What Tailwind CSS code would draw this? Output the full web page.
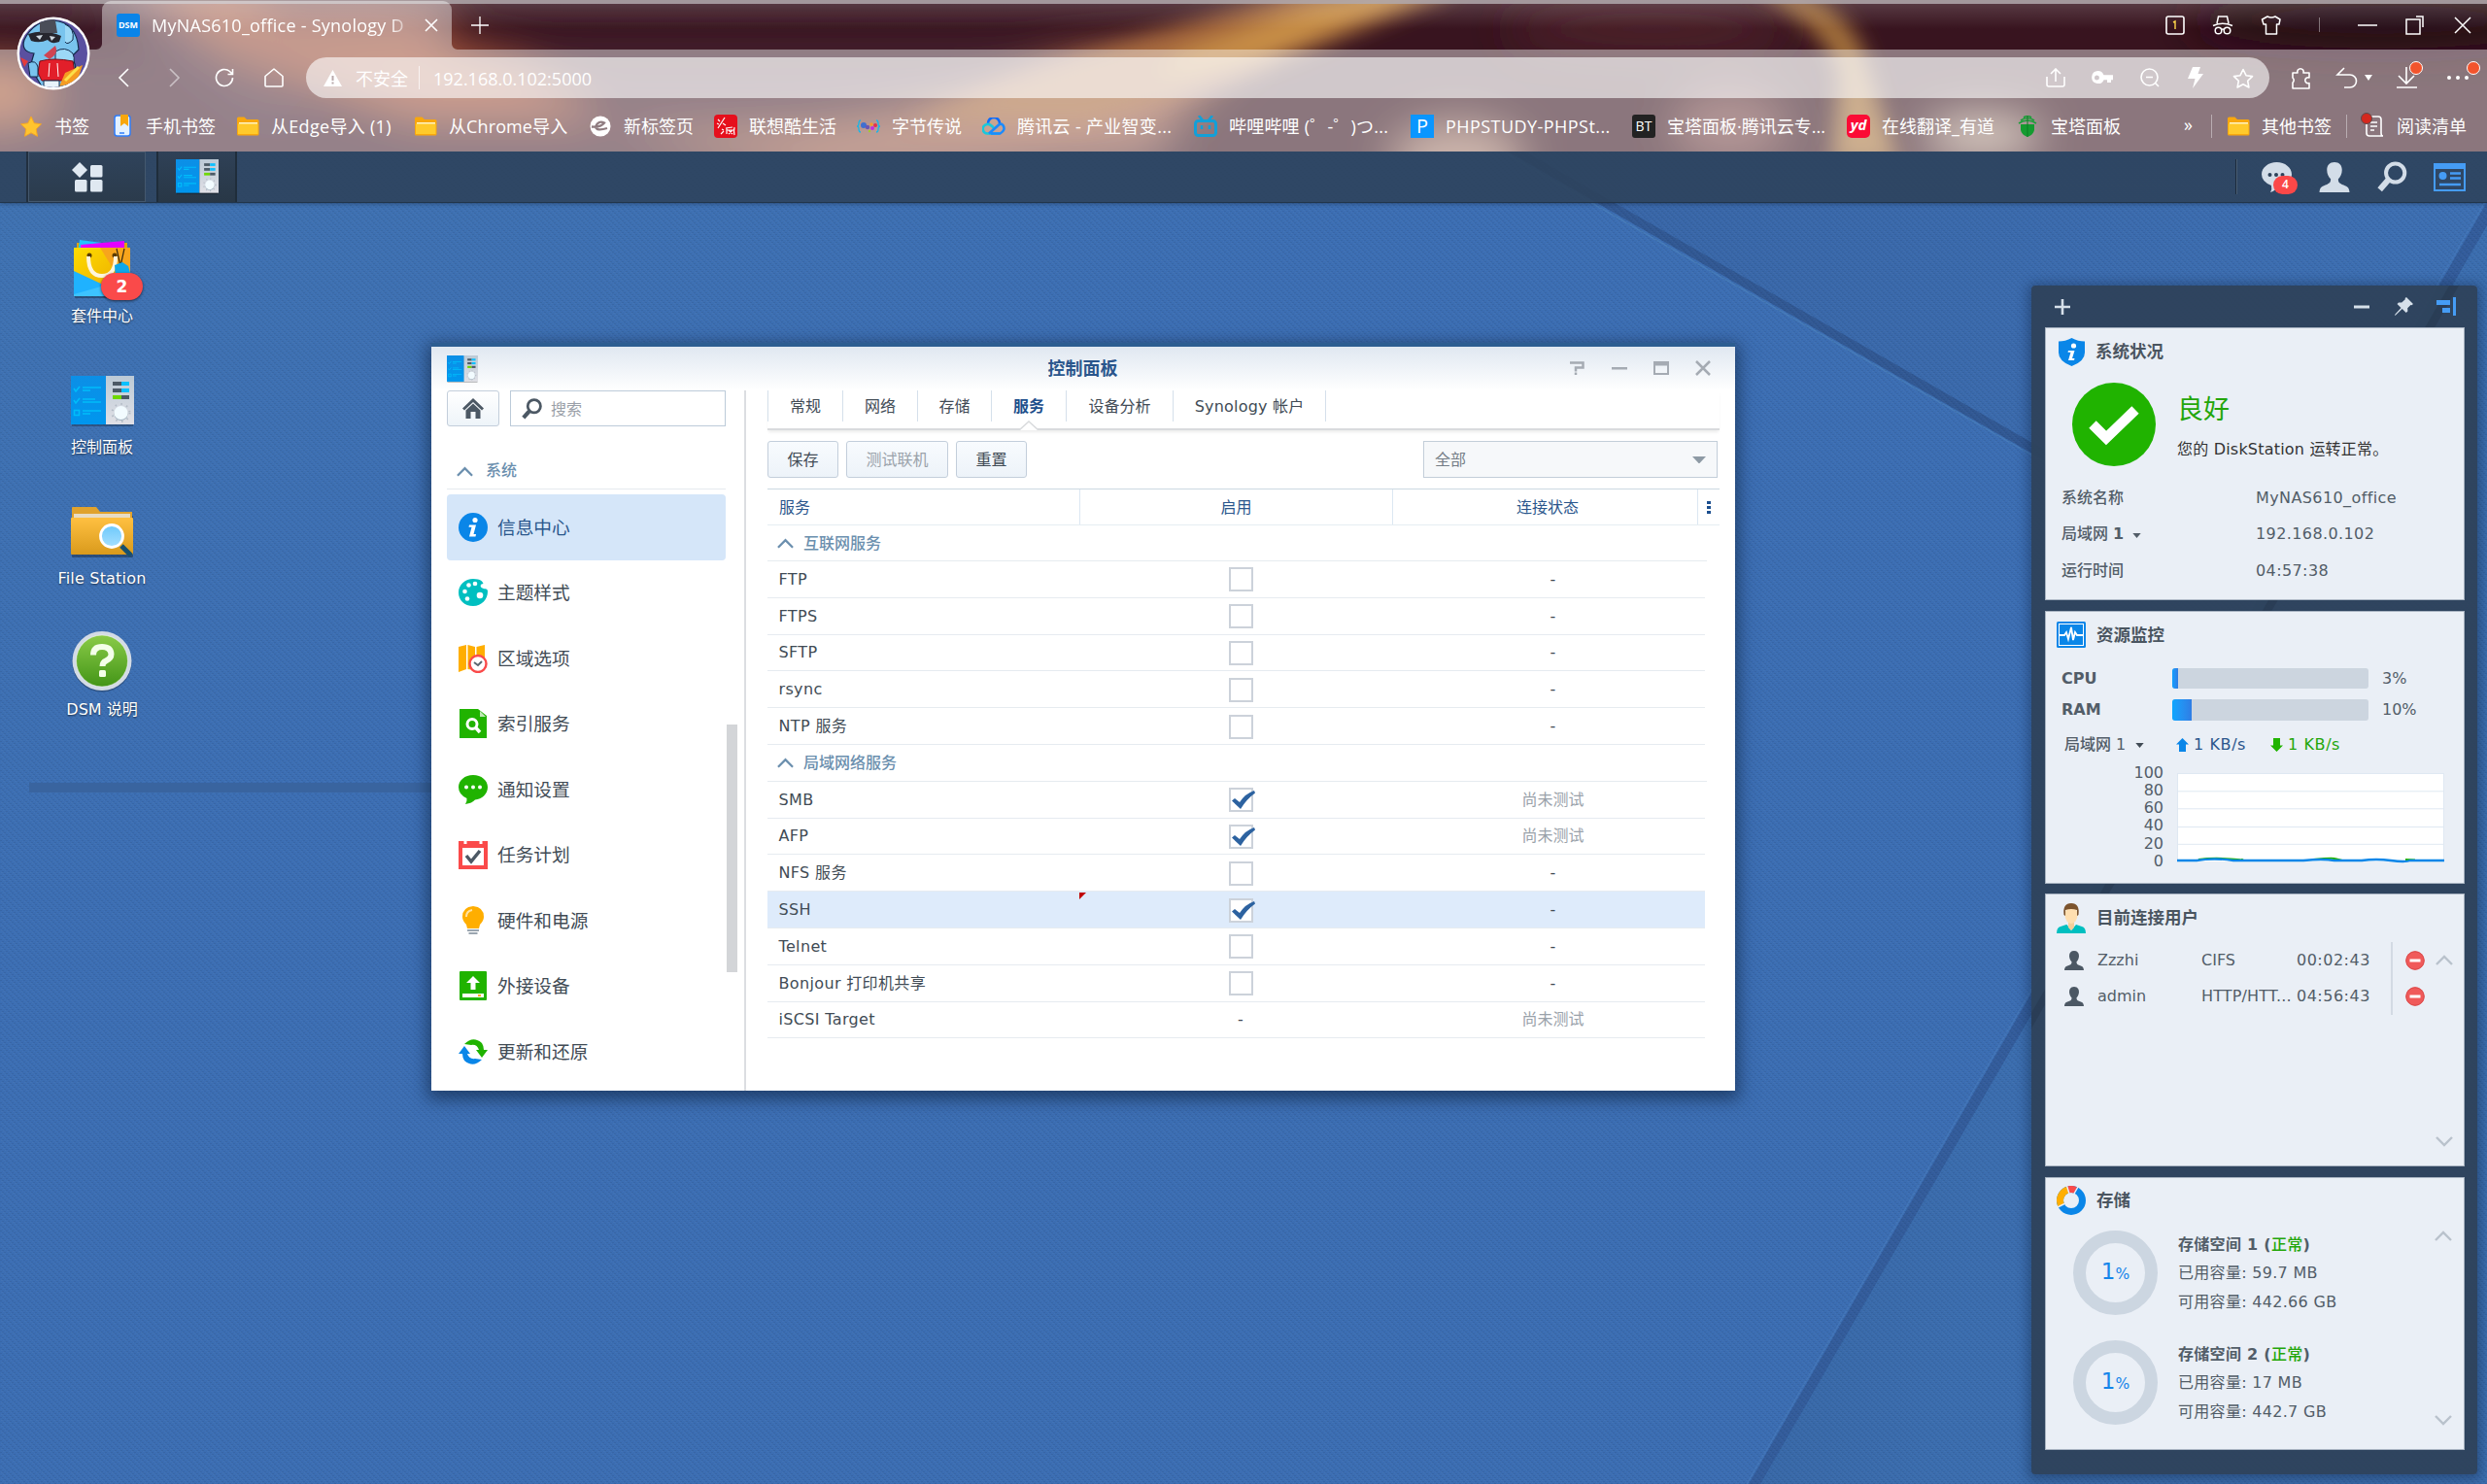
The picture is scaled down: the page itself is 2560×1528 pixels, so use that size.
<!DOCTYPE html>
<html lang="zh-CN">
<head>
<meta charset="utf-8">
<title>MyNAS610_office - Synology DiskStation</title>
<script src="https://cdn.jsdelivr.net/npm/@tailwindcss/browser@4"></script>
</head>
<body class="w-[2560px] h-[1528px] overflow-hidden flex flex-col font-['DejaVu_Sans','Noto_Sans_CJK_SC',sans-serif] text-[16px] leading-6 text-[#414b55]">

<!-- Shared symbols -->
<svg width="0" height="0" class="absolute">
  <defs>
    <linearGradient id="gBlue" x1="0" y1="0" x2="0" y2="1"><stop offset="0" stop-color="#0c8fe6"/><stop offset="1" stop-color="#0096ee"/></linearGradient>
    <linearGradient id="gGrey" x1="0" y1="0" x2="0" y2="1"><stop offset="0" stop-color="#bccad6"/><stop offset="1" stop-color="#e0e0e6"/></linearGradient>
    <linearGradient id="gFolder" x1="0" y1="0" x2="0" y2="1"><stop offset="0" stop-color="#ffc041"/><stop offset="1" stop-color="#d99a1c"/></linearGradient>
    <linearGradient id="gLens" x1="0" y1="0" x2="0" y2="1"><stop offset="0" stop-color="#6cc8fb"/><stop offset="1" stop-color="#a6e0ff"/></linearGradient>
    <linearGradient id="gGreen" x1="0" y1="0" x2="0" y2="1"><stop offset="0" stop-color="#8acb48"/><stop offset="1" stop-color="#439517"/></linearGradient>
    <linearGradient id="gBag" x1="0" y1="0" x2="1" y2="1"><stop offset="0" stop-color="#ffdc00"/><stop offset="1" stop-color="#e8a400"/></linearGradient>
    <symbol id="cpanel" viewBox="0 0 65 52" preserveAspectRatio="none">
      <rect x="1" y="3" width="63" height="49" fill="#000" opacity=".25"/>
      <rect width="36" height="50" fill="url(#gBlue)"/><rect x="36" width="29" height="50" fill="url(#gGrey)"/>
      <g fill="none" stroke="#00bdfa" stroke-width="1.6"><path d="M3 13l2 3 4-5M3 25l2 3 4-5M12 12h19M12 15h8M12 24h13M12 27h19M12 36h19M12 39h8"/><rect x="3.5" y="35.500" width="5" height="5"/></g>
      <rect x="43" y="6" width="9" height="4" fill="#4c5a66"/><rect x="52" y="6" width="8" height="4" fill="#0cc0ff"/>
      <rect x="43" y="13" width="9" height="4" fill="#4c5a66"/><rect x="52" y="13" width="8" height="4" fill="#0cc0ff"/>
      <rect x="43" y="20" width="9" height="4" fill="#6fd800"/><rect x="52" y="20" width="8" height="4" fill="#4c5a66"/>
      <circle cx="51.500" cy="38" r="9" fill="none" stroke="#b3bcc6" stroke-dasharray="1.500 4.500" stroke-width="2"/>
      <circle cx="51.500" cy="39" r="7" fill="#9fb0bd"/><circle cx="51.500" cy="38" r="7" fill="#f2fbff"/>
    </symbol>
    <symbol id="bmfolder" viewBox="0 0 24 20"><path d="M1 2a1.500 1.500 0 0 1 1.500-1.500h6L11 3h11a1.500 1.500 0 0 1 1.500 1.500V18A1.500 1.500 0 0 1 22 19.500H2.500A1.500 1.500 0 0 1 1 18z" fill="#f8a70d"/><path d="M3 6h19v2.500H3z" fill="#fff3c4"/><path d="M2 7.500h20.500V18H2z" fill="#ffca2b"/></symbol>
    <symbol id="user" viewBox="0 0 20 20"><path d="M10 0c3.200 0 5 2 5 5.200 0 2.600-1.200 4.800-2.500 6 0 2 .5 2.800 2.500 3.600 3 1.100 4.700 1.400 5 5.200H0c.3-3.800 2-4.100 5-5.200 2-.8 2.500-1.600 2.500-3.600C6.200 10 5 7.800 5 5.200 5 2 6.800 0 10 0z" fill="currentColor"/></symbol>
    <symbol id="mag" viewBox="0 0 24 24"><circle cx="14" cy="9" r="7.200" fill="none" stroke="currentColor" stroke-width="3"/><path d="M8.500 14.500L2 22" stroke="currentColor" stroke-width="4.500"/></symbol>
    <symbol id="stop" viewBox="0 0 20 20"><circle cx="10" cy="10" r="9.700" fill="#f05a5a"/><circle cx="10" cy="10" r="9.200" fill="none" stroke="#d94b4b"/><rect x="4.500" y="8.500" width="11" height="3" fill="#fff"/></symbol>
    <symbol id="up" viewBox="0 0 18 11"><path d="M1 10l8-8 8 8" fill="none" stroke="currentColor" stroke-width="2.400"/></symbol>
    <symbol id="caret" viewBox="0 0 10 6"><path d="M0 0h10L5 6z" fill="currentColor"/></symbol>
  </defs>
</svg>

<!-- ================= Browser chrome ================= -->
<header class="relative h-[156px] shrink-0 overflow-hidden bg-[#35131f] text-white text-[18px] font-['Open_Sans','Noto_Sans_CJK_SC',sans-serif]">
  <svg class="absolute inset-0" width="2560" height="156">
    <defs><filter id="b1" x="-30%" y="-60%" width="160%" height="220%"><feGaussianBlur stdDeviation="22"/></filter><filter id="b2" x="-30%" y="-30%" width="160%" height="160%"><feGaussianBlur stdDeviation="11"/></filter>
    <linearGradient id="topl" x1="0" y1="0" x2="0" y2="1"><stop offset="0" stop-color="#fff" stop-opacity=".18"/><stop offset="1" stop-color="#fff" stop-opacity="0"/></linearGradient></defs>
    <rect width="2560" height="156" fill="#38141f"/>
    <g filter="url(#b1)">
      <rect x="-40" y="50" width="1250" height="150" fill="#4a2636"/>
      <path d="M110-20H240L520 60 620 120H430L250 60z" fill="#a8593c"/>
      <ellipse cx="-10" cy="95" rx="60" ry="30" fill="#b0603c"/>
      <ellipse cx="360" cy="20" rx="110" ry="25" fill="#8f4c40"/>
      <path d="M620 130Q900 160 1100 60L1300 40 1180 150 850 180z" fill="#a0604c"/>
      <path d="M80 -20H135L330 120H260z" fill="#533040"/>
      <ellipse cx="1500" cy="165" rx="70" ry="40" fill="#a88070"/>
      <ellipse cx="1780" cy="130" rx="60" ry="40" fill="#7a4a4a"/>
      <ellipse cx="2040" cy="140" rx="60" ry="22" fill="#c8b09c"/>
      <ellipse cx="1700" cy="30" rx="150" ry="25" fill="#4e212b"/>
      <ellipse cx="2450" cy="20" rx="200" ry="30" fill="#260a12"/>
    </g>
    <g filter="url(#b2)">
      <path d="M1340-10H1500L1290 75 1120 125H930L1120 55z" fill="#a86a3c"/>
      <path d="M1410-15H1500L1300 58 1190 78 1220 55z" fill="#c99046"/>
      <path d="M1805-10H1845Q1905 10 1920 60L1955 170H1885L1893 80Q1885 30 1805-10z" fill="#a8743c"/>
    </g>
    <rect width="2560" height="30" fill="url(#topl)"/>
    <rect width="2560" height="4" fill="#b0a8ac" opacity=".85"/>
    <path d="M0 51H99a6 6 0 0 0 6-6V10a9 9 0 0 1 9-9H456a9 9 0 0 1 9 9V45a6 6 0 0 0 6 6H2560V156H0z" fill="#fff" opacity=".42"/>
  </svg>

  <!-- Tab strip -->
  <div class="relative h-[51px] flex items-center pl-[120px]">
    <span class="w-6 h-6 rounded-[3px] bg-[#0a84e8] text-[9px] font-bold flex items-center justify-center leading-none">DSM</span>
    <span class="ml-3 w-[271px] whitespace-nowrap tracking-[0.250px] [mask-image:linear-gradient(90deg,#000_245px,transparent_272px)]">MyNAS610_office - Synology D</span>
    <svg class="ml-[10px]" width="14" height="14" viewBox="0 0 14 14" stroke="#fff" stroke-width="1.600"><path d="M1 1l12 12M13 1L1 13"/></svg>
    <svg class="ml-[34px]" width="18" height="18" viewBox="0 0 18 18" stroke="#fff" stroke-width="1.300"><path d="M9 0v18M0 9h18"/></svg>
    <div class="ml-auto pr-[16px] flex items-center">
      <svg width="20" height="20" viewBox="0 0 20 20" fill="none" stroke="#fff" stroke-width="1.600"><rect x="1" y="1" width="18" height="18" rx="2"/><path d="M8 7l2-1v8" stroke="#ffd84a" stroke-width="1.400"/></svg>
      <svg class="ml-[28px]" width="22" height="20" viewBox="0 0 22 20" fill="none" stroke="#fff" stroke-width="1.500"><path d="M5 8L6.500 1h9L17 8M1 10.500Q11 6 21 10.500"/><circle cx="6.500" cy="15.500" r="3.300"/><circle cx="15.500" cy="15.500" r="3.300"/><path d="M9.500 14.500q1.500-1 3 0"/></svg>
      <svg class="ml-[28px]" width="22" height="20" viewBox="0 0 22 20" fill="none" stroke="#fff" stroke-width="1.500"><path d="M7 1q4 2 8 0l5 3-1 5h-2.500v10h-11V9H3L1.500 4z" stroke-linejoin="round"/></svg>
      <span class="ml-[38px] w-px h-[15px] bg-white/40"></span>
      <svg class="ml-[39px]" width="20" height="20" viewBox="0 0 20 20" stroke="#fff" stroke-width="1.500"><path d="M0 10h20"/></svg>
      <svg class="ml-[29px]" width="19" height="20" viewBox="0 0 19 20" fill="none" stroke="#fff" stroke-width="1.500"><rect x="1" y="4" width="14" height="15"/><path d="M11 1h7v11"/></svg>
      <svg class="ml-[31px]" width="18" height="18" viewBox="0 0 18 18" stroke="#fff" stroke-width="1.500"><path d="M1 1l16 16M17 1L1 17"/></svg>
    </div>
  </div>

  <!-- Toolbar -->
  <div class="relative h-[58px] flex items-center pl-[121px]">
    <svg width="12" height="20" viewBox="0 0 12 20" fill="none" stroke="#fff" stroke-width="1.600"><path d="M11 1L2 10l9 9"/></svg>
    <svg class="ml-[41px] opacity-50" width="12" height="20" viewBox="0 0 12 20" fill="none" stroke="#fff" stroke-width="1.600"><path d="M1 1l9 9-9 9"/></svg>
    <svg class="ml-[35px]" width="20" height="20" viewBox="0 0 20 20" fill="none" stroke="#fff" stroke-width="1.600"><path d="M18.500 10a8.500 8.500 0 1 1-3-6.500L18 6M18.500 1v5.500h-5"/></svg>
    <svg class="ml-[31px]" width="20" height="20" viewBox="0 0 20 20" fill="none" stroke="#fff" stroke-width="1.600"><path d="M1 8.500L10 1l9 7.500V18a1 1 0 0 1-1 1H2a1 1 0 0 1-1-1z" stroke-linejoin="round"/></svg>
    <div class="ml-[23px] w-[2021px] h-[42px] rounded-full bg-white/60 flex items-center pl-[18px] pr-[16px]">
      <svg width="19" height="17" viewBox="0 0 19 17"><path d="M9.500 0L19 17H0z" fill="#fff"/><path d="M9.500 6v5M9.500 12.500v2" stroke="#b9a9ab" stroke-width="2"/></svg>
      <span class="ml-[14px] w-[54px] pt-px">不安全</span>
      <span class="ml-[11px] w-px h-6 bg-white/70"></span>
      <span class="ml-[14px] pt-px">192.168.0.102:5000</span>
      <span class="ml-auto"></span>
      <svg width="20" height="20" viewBox="0 0 20 20" fill="none" stroke="#fff" stroke-width="1.600"><path d="M10 14V1M5 6l5-5 5 5M1 9v8a2 2 0 0 0 2 2h14a2 2 0 0 0 2-2V9"/></svg>
      <svg class="ml-[27px]" width="22" height="14" viewBox="0 0 22 14"><path d="M6.500 0a6.500 6.500 0 0 1 6 4.200H22v5h-2V12h-4V9.200h-3.400A6.500 6.500 0 1 1 6.500 0zm-1 4.500a2.500 2.500 0 1 0 0 5 2.500 2.500 0 0 0 0-5z" fill="#fff" fill-rule="evenodd"/></svg>
      <svg class="ml-[28px]" width="20" height="20" viewBox="0 0 20 20" fill="none" stroke="#fff" stroke-width="1.600"><circle cx="9.500" cy="9.500" r="8.500"/><path d="M6 9.500h7M15.500 15.500L19 19"/></svg>
      <svg class="ml-[29px]" width="16" height="22" viewBox="0 0 16 22"><path d="M5 0h8l-2.500 7H16L5 22l2.500-10H0z" fill="#fff"/></svg>
      <svg class="ml-[30px]" width="22" height="21" viewBox="0 0 22 21" fill="none" stroke="#fff" stroke-width="1.600"><path d="M11 1.500l3 6.200 6.500.9-4.800 4.700 1.200 6.700L11 16.800 5.100 20l1.200-6.700L1.500 8.600 8 7.700z" stroke-linejoin="round"/></svg>
    </div>
    <svg class="ml-[21px]" width="23" height="23" viewBox="0 0 23 23" fill="none" stroke="#fff" stroke-width="1.600"><path d="M3 6h5a3.200 3.200 0 1 1 6 0h6v5a3 3 0 1 0 0 5.500V22H3v-6a3.200 3.200 0 0 0 0-5z" stroke-linejoin="round"/></svg>
    <svg class="ml-[24px]" width="38" height="22" viewBox="0 0 38 22" fill="none" stroke="#fff" stroke-width="1.600"><path d="M9 1L2 8h13a6.500 6.500 0 0 1 0 13H9"/><path d="M30 8h8l-4 6z" fill="#fff" stroke="none"/></svg>
    <div class="ml-[25px] relative w-[22px] h-[22px]">
      <svg width="22" height="22" viewBox="0 0 22 22" fill="none" stroke="#fff" stroke-width="1.600"><path d="M10 0v17M2 9l8 8 8-8M0 21h21"/></svg>
      <span class="absolute -top-[6px] left-[13px] w-[14px] h-[14px] rounded-full bg-[#f2542d] border border-white"></span>
    </div>
    <div class="ml-[30px] relative w-[24px] h-[22px] flex items-center gap-[5px]">
      <i class="w-[4px] h-[4px] rounded-full bg-white"></i><i class="w-[4px] h-[4px] rounded-full bg-white"></i><i class="w-[4px] h-[4px] rounded-full bg-white"></i>
      <span class="absolute -top-[6px] left-[20px] w-[14px] h-[14px] rounded-full bg-[#f2542d] border border-white"></span>
    </div>
  </div>

  <!-- Bookmarks bar -->
  <nav class="relative h-[41px] flex items-center pl-[20px] whitespace-nowrap [&>a]:flex [&>a]:items-center [&>a]:gap-3 [&>a]:shrink-0">
    <a class="w-[94px]"><svg width="24" height="22" viewBox="0 0 24 22"><path d="M12 1l3.200 6.800 7.300 1-5.300 5.200 1.300 7.300L12 17.800 5.500 21.300 6.800 14 1.500 8.800l7.300-1z" fill="#ffc42e" stroke="#f6a623"/></svg><span>书签</span></a>
    <a class="w-[129px]"><svg width="24" height="24" viewBox="0 0 24 24"><rect x="4" y="1" width="16" height="21" rx="2.500" fill="#e4f1ff" stroke="#2e7dfa" stroke-width="1.500"/><path d="M10 0h8v12l-4-3-4 3z" fill="#f8a70d"/><path d="M9 19h5" stroke="#2e7dfa" stroke-width="1.500"/></svg><span>手机书签</span></a>
    <a class="w-[183px]"><svg width="24" height="20"><use href="#bmfolder"/></svg><span class="tracking-[0.300px]">从Edge导入 (1)</span></a>
    <a class="w-[180px]"><svg width="24" height="20"><use href="#bmfolder"/></svg><span class="tracking-[0.100px]">从Chrome导入</span></a>
    <a class="w-[129px]"><svg width="24" height="22" viewBox="0 0 24 22"><circle cx="12" cy="11" r="10.500" fill="#fff"/><path d="M3 11.500q9 1 13-4-6-3-9 4 1 5 12 1.500" fill="none" stroke="#8f7c80" stroke-width="2.300"/></svg><span>新标签页</span></a>
    <a class="w-[147px]"><svg width="24" height="24" viewBox="0 0 24 24"><rect width="24" height="24" rx="4" fill="#e60f1c"/><path d="M4 5l2 2M3 9l2 1M11 3L4 14M9 9l3 2M8 15l2 1M7 20l3-3M12 14l7-1M13 14v6M13 16h6l-4 4M15 16l4 4M21 13q-1 4 0 8" stroke="#fff" stroke-width="1.200" fill="none"/></svg><span>联想酷生活</span></a>
    <a class="w-[129px]"><svg width="24" height="14" viewBox="0 0 24 14"><path d="M4 1Q2 1 2 4T0 7q2 0 2 3t2 3M20 1q2 0 2 3t2 3q-2 0-2 3t-2 3" fill="none" stroke="#19b6e8" stroke-width="1.300"/><circle cx="7" cy="6" r="3" fill="#3f6fd0"/><circle cx="11" cy="8" r="2.200" fill="#6a56b5"/><circle cx="15" cy="5" r="1.800" fill="#f59b2d"/><circle cx="19" cy="6" r="2" fill="#e8304a"/><circle cx="16" cy="9" r="2" fill="#c22de0"/><circle cx="13" cy="12" r="1.200" fill="#a5c92a"/></svg><span>字节传说</span></a>
    <a class="w-[218px]"><svg width="24" height="18" viewBox="0 0 24 18" fill="none" stroke-width="2.600"><path d="M6 6a6 6 0 0 1 12 0" stroke="#0a6cff"/><path d="M12 11Q8 6 5 7a4.600 4.600 0 0 0 1 9.500h12" stroke="#18c8dc"/><path d="M7 16.500L16 8.500Q19 5 21.500 8q3 5-3 8.500H9" stroke="#1a8bff"/></svg><span class="tracking-[0.300px]">腾讯云 - 产业智变...</span></a>
    <a class="w-[223px]"><svg width="24" height="22" viewBox="0 0 24 22" fill="none" stroke="#12a0d8" stroke-width="3"><rect x="1.500" y="5.500" width="21" height="15" rx="3"/><path d="M5 0l4 5M19 0l-4 5M8 10v4M16 10v4" stroke-width="2.600"/></svg><span class="tracking-[0.200px]">哔哩哔哩 (゜-゜)つ...</span></a>
    <a class="w-[228px]"><span class="w-6 h-6 bg-[#0a96ff] flex items-center justify-center text-[20px] leading-none">P</span><span class="tracking-[0.450px]">PHPSTUDY-PHPSt...</span></a>
    <a class="w-[221px]"><span class="w-6 h-6 rounded-[3px] bg-[#222] flex items-center justify-center text-[14px] leading-none">BT</span><span>宝塔面板·腾讯云专...</span></a>
    <a class="w-[174px]"><span class="w-6 h-6 rounded-[5px] bg-[#fb0b35] flex items-center justify-center text-[15px] leading-none font-bold italic pb-[2px]">yd</span><span>在线翻译_有道</span></a>
    <a class="w-[173px]"><svg width="24" height="22" viewBox="0 0 24 22"><path d="M5 9h14v6q-1 5-7 7-6-2-7-7z" fill="#149b30"/><path d="M3 8q9-6 18 0M5 5q7-5 14 0M8 2q4-3 8 0" stroke="#1a9e38" stroke-width="1.600" fill="none"/><path d="M12 0v22" stroke="#0b7d22"/></svg><span>宝塔面板</span></a>
    <span class="w-[28px] -mt-1">»</span>
    <span class="w-px h-6 bg-white/40"></span>
    <a class="ml-[15px] w-[123px]"><svg width="24" height="20"><use href="#bmfolder"/></svg><span>其他书签</span></a>
    <span class="w-px h-6 bg-white/40"></span>
    <a class="ml-[14px] relative"><svg width="25" height="24" viewBox="0 0 25 24" fill="none" stroke="#fff" stroke-width="1.600"><path d="M8 2h10a3 3 0 0 1 3 3v14q0 3 2 3H9a3 3 0 0 1-3-3V8M10 8h7M10 12h7M10 16h4"/></svg><i class="absolute left-0 top-[-2px] w-[12px] h-[12px] rounded-full bg-[#d5281e] border border-[#5b4a4d]"></i><span>阅读清单</span></a>
  </nav>
  <!-- Profile picture -->
  <svg class="absolute left-[17px] top-[17px]" width="76" height="76" viewBox="0 0 76 76">
    <clipPath id="av"><circle cx="38" cy="38" r="35"/></clipPath>
    <circle cx="38" cy="38" r="37.500" fill="#fff"/>
    <g clip-path="url(#av)"><rect width="76" height="76" fill="#5a50a0"/>
      <path d="M8 24Q18 4 38 4q24 2 26 30l-8 8q6 6 4 16l-10 14H26L14 52l4-14Q4 36 8 24z" fill="#79c4ee" stroke="#122a4a" stroke-width="1.200"/>
      <path d="M50 8q10 4 8 16-6 6-8 2" fill="#9cd8f6" stroke="#122a4a"/>
      <path d="M40 36q10-6 18 2 4 10-4 14l-14-2z" fill="#9cd8f6" stroke="#122a4a"/>
      <path d="M12 18q16-6 34 2l-2 6q-8 3-12-2-8 4-17 1z" fill="#26262e"/><path d="M24 4q10-4 16 0l2 13-18 0z" fill="#4a4d58"/><path d="M20 20l7-1-3 5zM34 20l6 1-4 4z" fill="#cfd8e0"/>
      <path d="M28 40l12-10q4 8-6 14z" fill="#cf4452"/>
      <path d="M24 46q14-4 34 0l2 12-8 8H26l-4-8z" fill="#e21f2a" stroke="#7a0c14"/><path d="M34 48l-1 14M42 48l1 14" stroke="#fff"/>
      <path d="M12 48q8-4 10 4v10H14z" fill="#79c4ee" stroke="#122a4a"/>
      <path d="M44 72l6-14 18-8-6 18z" fill="#f59c22"/><path d="M50 66l14-14" stroke="#fbe04a" stroke-width="3"/><path d="M28 66h16v8H28z" fill="#e8f3fb" stroke="#122a4a"/>
      <path d="M4 42l8 4-4 6z" fill="#e23b3b"/></g>
  </svg>
</header>

<!-- ================= DSM desktop ================= -->
<main class="relative flex-1 overflow-hidden bg-[#3a6cb0]">
  <svg class="absolute inset-0" width="2560" height="1372">
    <defs>
      <pattern id="weave" width="6" height="6" patternUnits="userSpaceOnUse"><path d="M0 1h2v1H0zM2 3h2v1H2zM4 5h2v1H4z" fill="#000" opacity=".07"/><path d="M3 0h2v1H3zM5 2h1v1H5zM1 4h2v1H1z" fill="#fff" opacity=".03"/></pattern>
      <linearGradient id="bg1" x1="0" y1="0" x2="1" y2="1"><stop offset="0" stop-color="#3f72b1"/><stop offset=".3" stop-color="#3c6eb3"/><stop offset="1" stop-color="#3b6db2"/></linearGradient>
      <linearGradient id="bg2" x1="0" y1="0" x2="1" y2="0"><stop offset="0" stop-color="#3865a6"/><stop offset="1" stop-color="#3d6fb2"/></linearGradient>
      <linearGradient id="bg3" x1="0" y1="0" x2="1" y2=".3"><stop offset="0" stop-color="#35629f"/><stop offset=".5" stop-color="#3b6dae"/></linearGradient>
    </defs>
    <rect width="2560" height="1372" fill="url(#bg1)"/>
    <path d="M1552 0L2340 452 2560 72V0z" fill="url(#bg2)"/>
    <path d="M2560 72L1804 1372H2560z" fill="url(#bg3)"/>
    <path d="M1552 0h18L2346 446l-6 8z" fill="#315893"/>
    <path d="M2560 52L1800 1372h12L2560 76z" fill="#335c9b"/>
    <path d="M1546 0L2340 455" stroke="#457ab8" stroke-width="1.500"/><path d="M2560 48L1798 1372" stroke="#4275b8" stroke-width="1.500"/>
    <rect width="2560" height="1372" fill="url(#weave)"/>
    <rect x="30" y="650" width="430" height="10" fill="#39649f"/>
  </svg>

  <!-- Taskbar -->
  <div class="relative h-[53px] bg-[#2e435c]/90 border-b border-[#22354b] shadow-[0_1px_4px_rgba(0,0,0,.3)] flex items-center">
    <div class="w-[29px] h-full border-r-2 border-[#22303f]"></div>
    <div class="w-[121px] h-full bg-gradient-to-b from-[#2f435b] to-[#2b3b4c] border border-[#44586e] flex items-center justify-center">
      <svg width="32" height="31" viewBox="0 0 32 31" fill="#dfe8f1"><path d="M8 0l8 8-8 8-8-8z"/><rect x="19" y="3" width="12.500" height="12.500" rx="1.500"/><rect x="3" y="18" width="12.500" height="12.500" rx="1.500"/><rect x="19" y="18" width="12.500" height="12.500" rx="1.500"/></svg>
    </div>
    <div class="ml-[11px] w-[83px] h-full bg-gradient-to-b from-[#2f4157] to-[#283746] border-x-2 border-[#1f2d3b] flex items-center justify-center">
      <svg width="44" height="36"><use href="#cpanel"/></svg>
    </div>
    <div class="ml-auto h-full flex items-center pr-[22px] text-[#d3dde8]">
      <span class="w-[2px] h-9 bg-[#1c2b3b] border-r border-[#4a5e74]"></span>
      <div class="relative ml-[25px] w-[32px] h-[31px]">
        <svg width="32" height="31" viewBox="0 0 32 31"><path d="M15.500 0C24 0 31 5.500 31 12.500S24 25 16 25q-1 4-7 6 2-3 1-7Q0 20 0 12.500C0 5.500 7 0 15.500 0z" fill="currentColor"/><g fill="#2e425a"><circle cx="8.500" cy="13" r="2"/><circle cx="15" cy="13" r="2"/><circle cx="21.500" cy="13" r="2"/></g></svg>
        <span class="absolute left-[12px] top-[14px] w-[25px] h-[19px] rounded-full bg-[#fb4848] text-white text-[12px] flex items-center justify-center font-['Open_Sans',sans-serif] font-semibold">4</span>
      </div>
      <svg class="ml-[27px]" width="32" height="31"><use href="#user"/></svg>
      <svg class="ml-[28px]" width="32" height="32"><use href="#mag"/></svg>
      <svg class="ml-[26px]" width="33" height="29" viewBox="0 0 33 29"><rect x="1" y="1" width="31" height="27" fill="none" stroke="#459cf5" stroke-width="2"/><path d="M0 0h33v6H0z" fill="#459cf5"/><circle cx="9.500" cy="13" r="4" fill="#459cf5"/><path d="M17 10.500h11M17 15.500h11M6 22h22" stroke="#459cf5" stroke-width="2.500"/></svg>
    </div>
  </div>

  <!-- Desktop icons -->
  <ul class="absolute left-[30px] top-[91px] w-[150px] text-white text-center [text-shadow:0_1px_2px_rgba(0,0,0,.6)]">
    <li class="h-[135px] flex flex-col items-center">
      <div class="relative w-[60px] h-[67px]">
        <svg width="60" height="62" viewBox="0 0 60 62"><rect x="2" y="10" width="57" height="50" rx="1" fill="#000" opacity=".3"/><path d="M4 3h52v10H4z" fill="#e0a300"/><path d="M7 0l30 4-2 9H5z" fill="#22c3ff"/><path d="M8 5L53 1v7H8z" fill="#e400ff"/><rect x="1" y="8" width="58" height="50" fill="url(#gBag)"/><path d="M28 8h31v50z" fill="#f7a51c"/><path d="M1 32l30 14 3 12H1z" fill="#1fb2ff"/><path d="M1 56l28-8 3 10H1z" fill="#3dc3ff"/><circle cx="17" cy="16" r="2.500" fill="#5a3c00"/><circle cx="43" cy="16" r="2.500" fill="#5a3c00"/><path d="M16 17q0 20 14 20t14-20" fill="none" stroke="#fff6dc" stroke-width="4"/><path d="M45 9l4 18M53 9l-4 18" stroke="#3a2c10" stroke-width="1.200"/><path d="M43 26l8-3 6 4 4 14H44z" fill="#0fa7ea"/></svg>
        <span class="absolute left-[29px] top-[34px] w-[43px] h-[28px] rounded-full bg-[#fa4a4a] shadow-[0_1px_3px_rgba(0,0,0,.6)] flex items-center justify-center text-[17px] font-bold [text-shadow:none]">2</span>
      </div>
      <span>套件中心</span>
    </li>
    <li class="h-[135px] flex flex-col items-center"><svg class="mt-[5px] mb-[10px]" width="65" height="52"><use href="#cpanel"/></svg><span>控制面板</span></li>
    <li class="h-[135px] flex flex-col items-center">
      <svg class="mt-[4px] mb-[9px]" width="66" height="54" viewBox="0 0 66 54"><rect x="2" y="10" width="63" height="43" rx="1" fill="#000" opacity=".3"/><path d="M2 2q0-1 1-1h24l4 5h33v16H2z" fill="#e0a22d"/><path d="M4 8h58v8H4z" fill="#e8dcc4"/><rect x="1" y="12" width="64" height="38" rx="1" fill="url(#gFolder)"/><path d="M53 41l10 10" stroke="#17506f" stroke-width="5"/><circle cx="43" cy="31" r="11.500" fill="url(#gLens)" stroke="#fff" stroke-width="2.800"/></svg>
      <span class="whitespace-nowrap tracking-[0.200px]">File Station</span>
    </li>
    <li class="flex flex-col items-center">
      <svg class="-mt-[3px] mb-[6px]" width="62" height="64" viewBox="0 0 62 64"><circle cx="31" cy="33" r="30.500" fill="#000" opacity=".25"/><circle cx="31" cy="31.500" r="30.500" fill="#d3dbe6"/><circle cx="31" cy="31.500" r="26.500" fill="url(#gGreen)" stroke="#fff" stroke-opacity=".5"/><path d="M22 25.500Q22 17 31 17t9.500 7.500Q40.500 29 35 31.500 31.500 33 31.500 37" fill="none" stroke="#f4ffe9" stroke-width="6"/><rect x="28" y="41" width="7" height="7" rx="1.500" fill="#f4ffe9"/></svg>
      <span>DSM 说明</span>
    </li>
  </ul>

  <!-- Control panel window -->
  <section class="absolute left-[444px] top-[197px] w-[1342px] h-[770px] bg-white border-t-4 border-[#2c5d91] flex flex-col shadow-[0_5px_16px_4px_rgba(15,35,65,.6)]">
    <div class="h-[45px] shrink-0 grid grid-cols-3 items-center bg-gradient-to-b from-[#e0e8f1] to-white pl-4 pr-[25px]">
      <svg width="32" height="28"><use href="#cpanel"/></svg>
      <h1 class="text-center text-[18px] font-bold text-[#2a568c] pl-2">控制面板</h1>
      <div class="flex justify-end gap-[27px] text-[#a5abb3] -mt-[2px]">
        <svg width="16" height="16" viewBox="0 0 16 16" fill="none" stroke="currentColor" stroke-width="2.500"><path d="M0 2.500h13.500v5H6v4M6 12.500V15"/></svg>
        <svg width="16" height="16" viewBox="0 0 16 16"><path d="M0 7h16v2.500H0z" fill="currentColor"/></svg>
        <svg width="16" height="16" viewBox="0 0 16 16" fill="none" stroke="currentColor" stroke-width="2"><rect x="1" y="2" width="14" height="12"/><path d="M1 3.500h14" stroke-width="4"/></svg>
        <svg width="16" height="16" viewBox="0 0 16 16" stroke="currentColor" stroke-width="2.500"><path d="M1 1l14 14M15 1L1 15"/></svg>
      </div>
    </div>
    <div class="flex-1 flex min-h-0">
      <!-- Sidebar -->
      <aside class="relative w-[324px] pl-4 pr-[19px] border-r-2 border-[#dcdee1]">
        <div class="flex gap-[11px]">
          <button class="w-[54px] h-[37px] border border-[#c3cedb] rounded-[3px] bg-gradient-to-b from-white to-[#eef4f9] flex items-center justify-center"><svg width="22" height="21" viewBox="0 0 22 21" fill="#4c5864"><path d="M0 10.500L11 0l11 10.500-2 2L11 4 2 12.500z"/><path d="M3.500 12.500L11 5.500l7.500 7V21h-5v-7h-5v7h-5z"/></svg></button>
          <div class="w-[222px] h-[37px] border border-[#bccbd9] flex items-center pl-[11px] text-[#9aa0a8] [&>svg]:text-[#4c5864]"><svg width="22" height="22"><use href="#mag"/></svg><span class="ml-2 pt-[2px]">搜索</span></div>
        </div>
        <div class="h-[65px] pt-[26px] pl-[10px] border-b border-[#e6eaee] flex items-center gap-[13px] text-[#6b8fae] font-medium"><svg class="mt-[2px]" width="17" height="11"><use href="#up"/></svg><span class="pt-px">系统</span></div>
        <ul id="side" class="mt-[5px]"></ul>
        <i class="absolute left-[304px] top-[344px] w-[11px] h-[255px] bg-[#d3d5d8]"></i>
      </aside>
      <!-- Main -->
      <div class="flex-1 pl-[22px] pr-4 flex flex-col">
        <div class="relative h-[41px] shrink-0 border-b-2 border-[#d9dbdd] shadow-[0_3px_3px_-1px_rgba(0,0,0,.08)]">
          <nav class="flex h-8 border-l border-[#d5e0eb] [&>a]:border-r [&>a]:border-[#d5e0eb] [&>a]:flex [&>a]:items-center [&>a]:justify-center [&>a]:pb-px [&>a]:pt-[2px]">
            <a class="w-[77px]">常规</a><a class="w-[77px]">网络</a><a class="w-[76px]">存储</a><a class="w-[77px] font-bold text-[#1f4f8c]">服务</a><a class="w-[110px]">设备分析</a><a class="w-[157px] tracking-[0.200px]">Synology 帐户</a>
          </nav>
          <svg class="absolute left-[259px] top-[31px]" width="20" height="10" viewBox="0 0 20 10"><path d="M0 10L10 1l10 9" fill="#fff" stroke="#d9dbdd" stroke-width="1.500"/></svg>
        </div>
        <div class="mt-[11px] flex gap-2 h-[38px] [&>button]:border [&>button]:border-[#c3cedb] [&>button]:rounded-[3px] [&>button]:bg-gradient-to-b [&>button]:from-[#f8fbfe] [&>button]:to-[#edf3f9] [&>button]:pt-[2px]">
          <button class="w-[73px]">保存</button><button class="w-[105px] text-[#9aa2aa]">测试联机</button><button class="w-[73px]">重置</button>
          <div class="ml-auto mr-[2px] w-[303px] border border-[#c3ced9] bg-[#f6f8fa] flex items-center justify-between pl-[11px] pr-[11px] text-[#747d86]"><span class="pt-[2px]">全部</span><svg class="text-[#8e9aa5]" width="14" height="7"><path d="M0 0h14L7 7.500z" fill="currentColor"/></svg></div>
        </div>
        <div class="mt-[11px] h-[38px] shrink-0 border-y border-t-[#ccd8e2] border-b-[#e6edf3] flex items-center text-[#2a568c] [&>span]:pt-[2px]">
          <span class="w-[322px] h-full flex items-center pl-[12px] border-r border-[#dce7f2]">服务</span>
          <span class="w-[322px] h-full flex items-center justify-center border-r border-[#dce7f2]">启用</span>
          <span class="w-[314px] h-full flex items-center justify-center pl-[5px] border-r border-[#dce7f2]">连接状态</span>
          <svg class="ml-[9px]" width="4" height="13" viewBox="0 0 4 13"><path d="M0 0h4v3H0zM0 5h4v3H0zM0 10h4v3H0z" fill="#1c4f8f"/></svg>
        </div>
        <div id="rows"></div>
      </div>
    </div>
  </section>

  <!-- Widgets -->
  <section class="absolute left-[2091px] top-[138px] w-[459px] h-[1224px] rounded-[4px] bg-[#2e435c]/97 shadow-[0_2px_12px_4px_rgba(15,35,65,.4)] px-[14px]">
    <svg class="absolute inset-0 opacity-40" width="459" height="1224"><path d="M430 0h10L0 765v-16z" fill="#24354a"/></svg>
    <div class="relative h-[43px] flex items-center pl-[10px] pr-[8px] text-[#d6e0ea]">
      <svg width="16" height="16" viewBox="0 0 16 16" stroke="currentColor" stroke-width="2.600"><path d="M8 0v16M0 8h16"/></svg>
      <svg class="ml-auto" width="16" height="16" viewBox="0 0 16 16" stroke="currentColor" stroke-width="3"><path d="M0 8h16"/></svg>
      <svg class="ml-[26px]" width="19" height="19" viewBox="0 0 19 19"><path d="M12 0l7 7-1.500 1.200-1-.3-3.300 3.400.2 3.200-1.700 1.500-4-4L1 18.500 0 19l.5-1.500L6.500 11l-4-4L4 5.400l3.200.2 3.600-3.400L10.700 1z" fill="currentColor"/></svg>
      <svg class="ml-[24px]" width="20" height="19" viewBox="0 0 20 19" fill="#459cf5"><path d="M17 0h3v19h-3zM0 3h14v5H0zM6 11h8v5H6z"/></svg>
    </div>
    <div class="relative flex flex-col gap-[10.500px] [&>article]:h-[281px] [&>article]:w-[432px] [&>article]:border [&>article]:border-[#a9b4c2] [&>article]:bg-[#eaeff6] [&_h2]:text-[17.500px] [&_h2]:font-bold [&_h2]:text-[#4a5560]">
      <!-- System health -->
      <article>
        <header class="h-[48px] flex items-center pl-[13px] gap-[11px]"><svg width="27" height="29" viewBox="0 0 27 29"><path d="M13.500 0Q20 3.500 27 3.500V15q0 9-13.500 14Q0 24 0 15V3.500Q7 3.500 13.500 0z" fill="#0a86e8"/><circle cx="15.500" cy="8" r="2.600" fill="#fff"/><path d="M10 13h6.500l-2.500 8h2.500l-.5 2h-6l2.500-8.200H9.500z" fill="#fff"/></svg><h2>系统状况</h2></header>
        <div class="mt-[8px] h-[86px] flex pl-[27px]">
          <svg width="86" height="86" viewBox="0 0 86 86"><circle cx="43" cy="43" r="43" fill="#20b300"/><path d="M21 43l14 14 30-29" fill="none" stroke="#fff" stroke-width="10.500"/></svg>
          <div class="ml-[22px] flex flex-col"><p class="text-[27px] leading-[36px] mt-[10px] text-[#23a60a]">良好</p><p class="mt-[11px] text-[#333] tracking-[0.200px]">您的 DiskStation 运转正常。</p></div>
        </div>
        <dl class="mt-[14px] grid grid-cols-[200px_1fr] auto-rows-[37.500px] items-center pl-[16px] [&>dt]:flex [&>dt]:items-center [&>dt]:text-[#525d68] [&>dd]:tracking-[0.400px] [&>dd]:text-[#525d68] [&>dt]:font-medium">
          <dt>系统名称</dt><dd>MyNAS610_office</dd>
          <dt>局域网&nbsp;<b>1</b><svg class="ml-[9px] mt-[2px]" width="9" height="5"><use href="#caret"/></svg></dt><dd>192.168.0.102</dd>
          <dt>运行时间</dt><dd>04:57:38</dd>
        </dl>
      </article>
      <!-- Resource monitor -->
      <article>
        <header class="h-[48px] flex items-center pl-[11px] gap-[11px]"><svg width="30" height="27" viewBox="0 0 30 27"><rect width="30" height="27" rx="1.500" fill="#0a86e8"/><rect x="2.500" y="2.500" width="25" height="22" fill="none" stroke="#fff"/><path d="M3 14h5l2-3 2 7 3-12 2 13 2-8 2 3h6" fill="none" stroke="#fff" stroke-width="1.800"/></svg><h2>资源监控</h2></header>
        <div class="mt-[5px] pl-[16px] grid grid-cols-[114px_202px_1fr] auto-rows-[32.500px] items-center text-[#525d68] [&>p]:pl-[14px]">
          <b>CPU</b><div class="h-[21px] rounded-[3px] bg-[#ccd5df] overflow-hidden"><div class="h-full bg-gradient-to-r from-[#0aa0ff] to-[#2f7de4]" style="width:3%"></div></div><p>3%</p>
          <b>RAM</b><div class="h-[22px] rounded-[3px] bg-[#ccd5df] overflow-hidden"><div class="h-full bg-gradient-to-r from-[#0aa6ff] to-[#2f7de4]" style="width:10%"></div></div><p>10%</p>
        </div>
        <div class="mt-[6px] h-[26px] flex items-center pl-[19px]">
          <span class="w-[73px] text-[#525d68] font-medium whitespace-nowrap">局域网 1</span><svg width="9" height="5" class="mt-[2px]"><use href="#caret"/></svg>
          <svg class="ml-[33px]" width="13" height="14" viewBox="0 0 13 14"><path d="M6.500 0L13 6.500h-3V14H3V6.500H0z" fill="#0a86e8"/></svg><span class="ml-[5px] w-[79px] text-[#2a568c] whitespace-nowrap tracking-[0.600px]">1 KB/s</span>
          <svg width="13" height="14" viewBox="0 0 13 14"><path d="M6.500 14L13 7.500h-3V0H3v7.500H0z" fill="#20b300"/></svg><span class="ml-[5px] text-[#23a60a] tracking-[0.600px]">1 KB/s</span>
        </div>
        <div class="mt-[7px] flex">
          <div class="w-[121px] text-right leading-[18.300px] text-[#525d68]">100<br>80<br>60<br>40<br>20<br>0</div>
          <svg class="ml-[14px] mt-[9px]" width="275" height="93" viewBox="0 0 275 93"><rect width="275" height="91" fill="#fff"/><path d="M0 .5H275M0 18.800H275M0 36.800H275M0 55.500H275M0 73.300H275M.5 0V91M274.500 0V91" stroke="#dfe8f2"/><path d="M22 89Q38 87 55 88.500T66 89M140 89Q160 87 162 88L170 90M235 89L245 89.500" fill="none" stroke="#20b300" stroke-width="2"/><path d="M0 90H20Q38 87 58 90H130Q150 88 162 90H190Q205 88 220 90T240 90H275" fill="none" stroke="#0a86e8" stroke-width="2.400"/></svg>
        </div>
      </article>
      <!-- Connected users -->
      <article class="flex flex-col">
        <header class="h-[48px] flex items-center pl-[11px] gap-[11px]"><svg width="30" height="31" viewBox="0 0 30 31"><path d="M0 31q0-6 4-7l6-2h10l6 2q4 1 4 7z" fill="#00bfc0"/><path d="M10.500 22L15 28l5-6z" fill="#eaeff6"/><path d="M12 17h6v8l-3 3-3-3z" fill="#f5cf9b"/><ellipse cx="15" cy="12" rx="6.500" ry="9" fill="#ffdfb0"/><path d="M7.500 12Q6 0 15 0t7.500 12l-1.500 1V7q-6-2-12 0v6z" fill="#7b532d"/></svg><h2>目前连接用户</h2></header>
        <div class="flex-1 flex text-[#525d68] pl-[19px] pt-px">
          <div class="w-[336px] grid grid-cols-[34px_107px_98px_1fr] auto-rows-[37.500px] items-center content-start whitespace-nowrap">
            <svg class="text-[#4c5864]" width="20" height="20"><use href="#user"/></svg><span>Zzzhi</span><span>CIFS</span><span class="tracking-[0.500px]">00:02:43</span>
            <svg class="text-[#4c5864]" width="20" height="20"><use href="#user"/></svg><span>admin</span><span class="tracking-[0.150px]">HTTP/HTT...</span><span class="tracking-[0.500px]">04:56:43</span>
          </div>
          <div class="h-[75px] border-l-2 border-[#d3dae3] pl-[13px] grid auto-rows-[37.500px] items-center"><svg width="20" height="20"><use href="#stop"/></svg><svg width="20" height="20"><use href="#stop"/></svg></div>
          <div class="ml-[11px] pt-[13px] pb-[19px] flex flex-col justify-between text-[#b9c2cc]"><svg width="18" height="11"><use href="#up"/></svg><svg class="rotate-180" width="18" height="11"><use href="#up"/></svg></div>
        </div>
      </article>
      <!-- Storage -->
      <article class="flex flex-col">
        <header class="h-[47px] flex items-center pl-[11px] gap-[11px]"><svg width="30" height="30" viewBox="0 0 30 30" fill="none" stroke-width="7"><circle cx="15" cy="15" r="11.500" stroke="#0a86e8"/><path d="M4.800 20.200A11.500 11.500 0 0 1 11.500 4" stroke="#ffae00"/><path d="M11.500 4A11.500 11.500 0 0 1 19.500 4.400" stroke="#fa4a4a"/><path d="M8 18.500L1 22M13 8L10.500 0M18 8l4-7" stroke="#eaeff6" stroke-width="1.500"/></svg><h2>存储</h2></header>
        <div class="flex-1 flex pl-[28px] pr-[12px] text-[#525d68]">
          <div class="flex-1 pt-[7px]">
            <div class="flex h-[113px]">
              <div class="w-[87px] h-[87px] rounded-full border-[13px] border-[#ccd6e1] flex items-baseline justify-center text-[#1585ea] pt-[11px] text-[23px] leading-[36px]">1<small class="text-[15.500px]">%</small></div>
              <div class="ml-[21px] leading-[29.500px] whitespace-nowrap"><p class="tracking-[0.300px]"><b class="font-bold">存储空间 1 (<span class="text-[#23a60a] font-medium">正常</span>)</b></p><p class="tracking-[0.300px]">已用容量: 59.7 MB</p><p class="tracking-[0.300px]">可用容量: 442.66 GB</p></div>
            </div>
            <div class="flex">
              <div class="w-[87px] h-[87px] rounded-full border-[13px] border-[#ccd6e1] flex items-baseline justify-center text-[#1585ea] pt-[11px] text-[23px] leading-[36px]">1<small class="text-[15.500px]">%</small></div>
              <div class="ml-[21px] leading-[29.500px] whitespace-nowrap"><p class="tracking-[0.300px]"><b class="font-bold">存储空间 2 (<span class="text-[#23a60a] font-medium">正常</span>)</b></p><p class="tracking-[0.300px]">已用容量: 17 MB</p><p class="tracking-[0.300px]">可用容量: 442.7 GB</p></div>
            </div>
          </div>
          <div class="pt-[7px] pb-[24px] flex flex-col justify-between text-[#b9c2cc]"><svg width="18" height="11"><use href="#up"/></svg><svg class="rotate-180" width="18" height="11"><use href="#up"/></svg></div>
        </div>
      </article>
    </div>
  </section>
</main>

<script>
const side = [
  ['信息中心', '<circle cx="15" cy="15" r="15" fill="#0a86e8"/><circle cx="17" cy="7.500" r="2.600" fill="#fff"/><path d="M11 12.500h7l-2.500 9.500h2.500l-.5 2.500h-6.500l2.500-9.700H10.500z" fill="#fff"/>'],
  ['主题样式', '<path d="M15 1c8 0 10 3 10.500 5-3 0-4 3-1 4.500 3 1.500 5.500 0 5.500 3.500 0 8-6 15-15 15S0 23 0 15 7 1 15 1z" fill="#00bfc0"/><g fill="#fff"><circle cx="6.500" cy="14" r="2.300"/><circle cx="10.500" cy="7.500" r="2.300"/><circle cx="17" cy="6" r="2.300"/><circle cx="9" cy="21.500" r="2.300"/><circle cx="22" cy="18" r="3.300"/></g>'],
  ['区域选项', '<path d="M0 3l8-2v25l-8 3zM9.500 1L17 3v24l-7.500-1zM18.500 3L27 1v22l-8.500 3z" fill="#ffae00"/><circle cx="20" cy="20.500" r="8.500" fill="#fff" stroke="#fa4a4a" stroke-width="2.400"/><path d="M16 19l4 3 4-4" fill="none" stroke="#5b6670" stroke-width="2"/>'],
  ['索引服务', '<path d="M1 0h19l9 7v23H1z" fill="#20b300"/><path d="M22 2v6h6" fill="#bfe8b5"/><circle cx="14" cy="15.500" r="5" fill="none" stroke="#fff" stroke-width="3"/><path d="M17.500 19l4.500 5" stroke="#fff" stroke-width="3.500"/>'],
  ['通知设置', '<path d="M15 0c8.500 0 15 5.500 15 12.500S24 25 17 25.500q-3 3.500-10 4.500 2-3 1.500-6Q0 20 0 12.500C0 5.500 6.500 0 15 0z" fill="#20b300"/><g fill="#fff"><circle cx="8" cy="12.500" r="2"/><circle cx="15" cy="12.500" r="2"/><circle cx="22" cy="12.500" r="2"/></g>'],
  ['任务计划', '<path d="M0 1h30v29H0z" fill="#fa4a4a"/><rect x="4" y="8" width="22" height="18" fill="#fff"/><path d="M7 0v4M23 0v4" stroke="#fff" stroke-width="3"/><path d="M8 16l5 6 9-11" fill="none" stroke="#4c5864" stroke-width="3.500"/>'],
  ['硬件和电源', '<path d="M15 0q11 1 11 11 0 4-4 8l-1 4H9l-1-4q-4-4-4-8Q4 1 15 0z" fill="#ffae00"/><path d="M8 11q0-6 6-7" fill="none" stroke="#ffe3a3" stroke-width="2"/><path d="M9 25h12M10.500 28h9" stroke="#9aa5b0" stroke-width="2"/>'],
  ['外接设备', '<rect x="1" width="28" height="30" rx="1" fill="#20b300"/><path d="M15 5l7 7h-4.500v7h-5v-7H8z" fill="#fff"/><rect x="4" y="23" width="22" height="4" fill="#fff"/><rect x="20" y="24" width="3" height="2" fill="#ffae00"/>'],
  ['更新和还原', '<path d="M6 7Q15-2 24 6q2 3 2 7h4l-6 8-6-8h3q-2-6-8-5z" fill="#20b300"/><path d="M24 23q-9 9-18 1-2-3-2-7H0l6-8 6 8H9q2 6 8 5z" fill="#0a86e8"/>']
];
document.getElementById('side').innerHTML = side.map(([t, i], n) =>
  `<li class="h-[67.5px] flex items-center pl-[12px] gap-[10px] text-[18.700px] rounded-[4px] ${n ? '' : 'bg-[#d5e6f9] text-[#2a568c]'}"><svg width="30" height="30" viewBox="0 0 30 30">${i}</svg><span class="pt-[2px]">${t}</span></li>`).join('');

const rows = ['#互联网服务', 'FTP|0|-', 'FTPS|0|-', 'SFTP|0|-', 'rsync|0|-', 'NTP 服务|0|-', '#局域网络服务', 'SMB|1|尚未测试', 'AFP|1|尚未测试', 'NFS 服务|0|-', 'SSH|1|-', 'Telnet|0|-', 'Bonjour 打印机共享|0|-', 'iSCSI Target|-|尚未测试'];
const box = on => `<span class="relative w-[25px] h-[25px] border-2 border-[#ccd2da] bg-white">${on ? '<svg class="absolute -left-px -top-px" width="28" height="24" viewBox="0 0 28 24"><path d="M2 12.500l3-2.500 5 4Q16 5 25 2l1 2.500Q17 11 11 21z" fill="#2c62a0"/></svg>' : ''}</span>`;
document.getElementById('rows').innerHTML = rows.map((r, n) => {
  if (r[0] === '#') return `<div class="${n ? 'h-[37.8px]' : 'h-[37px]'} w-[967px] border-b border-[#e6ebf0] flex items-center pl-[10px] gap-[10px] text-[#6b8fae] font-medium"><svg width="17" height="11"><use href="#up"/></svg><span class="pt-[2px]">${r.slice(1)}</span></div>`;
  const [name, on, st] = r.split('|');
  const sel = name === 'SSH';
  return `<div class="relative h-[37.8px] w-[965px] border-b border-[#e6ebf0] grid grid-cols-[321px_322px_322px] items-center ${sel ? 'bg-[#deebfb]' : ''}"><span class="pl-[11.500px] pt-px tracking-[0.350px]">${name}</span><span class="pl-[10px] pt-px flex justify-center">${on === '-' ? '-' : box(+on)}</span><span class="pl-[9px] pt-px text-center ${st === '-' ? '' : 'text-[#9aa2aa]'}">${st}</span>${sel ? '<svg class="absolute left-[321px] top-px" width="7" height="7"><path d="M0 0h7L0 7z" fill="#c00000"/></svg>' : ''}</div>`;
}).join('');
</script>
</body>
</html>
